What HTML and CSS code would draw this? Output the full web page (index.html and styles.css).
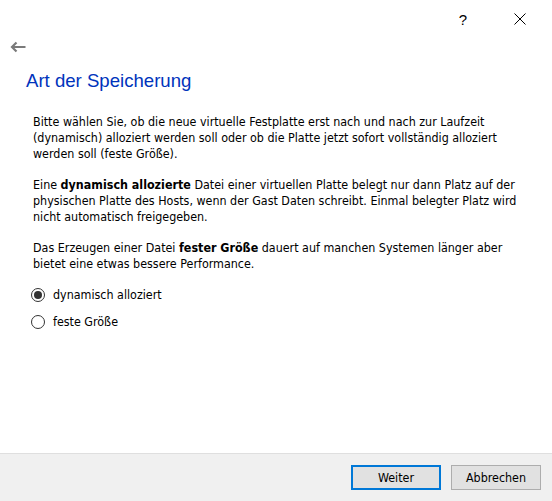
FILE: index.html
```html
<!DOCTYPE html>
<html lang="de">
<head>
<meta charset="utf-8">
<link rel="stylesheet" href="styles.css">
</head>
<body>
<div class="dialog">
  <div class="titlebar">
    <span class="help">?</span>
    <svg class="close" width="12" height="12" viewBox="0 0 12 12"><path d="M0.5 0.5 L11.5 11.5 M11.5 0.5 L0.5 11.5" stroke="#000" stroke-width="1" fill="none"/></svg>
  </div>
  <div class="backrow">
    <svg class="back" width="16" height="12" viewBox="0 0 16 12"><path d="M2 6 H15.5 M6.5 1.5 L2 6 L6.5 10.5" stroke="#7a7a7a" stroke-width="2.2" fill="none"/></svg>
  </div>
  <main class="content">
    <h1 class="title">Art der Speicherung</h1>
    <p class="para">Bitte wählen Sie, ob die neue virtuelle Festplatte erst nach und nach zur Laufzeit (dynamisch) alloziert werden soll oder ob die Platte jetzt sofort vollständig alloziert werden soll (feste Größe).</p>
    <p class="para">Eine <b>dynamisch allozierte</b> Datei einer virtuellen Platte belegt nur dann Platz auf der physischen Platte des Hosts, wenn der Gast Daten schreibt. Einmal belegter Platz wird nicht automatisch freigegeben.</p>
    <p class="para">Das Erzeugen einer Datei <b>fester Größe</b> dauert auf manchen Systemen länger aber bietet eine etwas bessere Performance.</p>
    <div class="options">
      <label class="option"><span class="radio checked"></span><span class="label">dynamisch alloziert</span></label>
      <label class="option"><span class="radio"></span><span class="label">feste Größe</span></label>
    </div>
  </main>
  <footer class="footer">
    <button class="btn primary">Weiter</button>
    <button class="btn">Abbrechen</button>
  </footer>
</div>
</body>
</html>
```

FILE: styles.css
```css
html, body {
  margin: 0;
  padding: 0;
  background: #fff;
}
body {
  width: 552px;
  height: 501px;
  overflow: hidden;
  font-family: "DejaVu Sans Condensed", "DejaVu Sans", sans-serif;
  color: #000;
}
.dialog {
  height: 501px;
  display: flex;
  flex-direction: column;
}
.titlebar {
  height: 38px;
  display: flex;
  align-items: center;
  justify-content: flex-end;
  gap: 47px;
  padding-right: 26px;
}
.help {
  font-family: "Liberation Sans", sans-serif;
  font-size: 15px;
  color: #000;
}
.close {
  display: block;
}
.backrow {
  height: 18px;
  padding-left: 10px;
  display: flex;
  align-items: center;
}
.back { display: block; }
.content {
  flex: 1;
  padding: 12px 32px 0 33px;
}
.title {
  margin: 0 0 0 -7px;
  font-family: "Liberation Sans", sans-serif;
  font-weight: normal;
  font-size: 18.6px;
  line-height: 26px;
  color: #0033bc;
}
.para {
  margin: 20px 0 0;
  font-size: 12.4px;
  line-height: 16px;
}
.para + .para { margin-top: 15px; }
.options {
  margin-top: 15px;
  margin-left: -2px;
  display: flex;
  flex-direction: column;
  gap: 11px;
}
.option {
  display: flex;
  align-items: center;
  gap: 8px;
  font-size: 12.4px;
  line-height: 16px;
}
.radio {
  width: 12px;
  height: 12px;
  border: 1px solid #333;
  border-radius: 50%;
  background: #fff;
  position: relative;
}
.radio.checked::after {
  content: "";
  position: absolute;
  left: 2px; top: 2px;
  width: 8px; height: 8px;
  border-radius: 50%;
  background: #333;
}
.footer {
  height: 46px;
  background: #f0f0f0;
  border-top: 1px solid #dfdfdf;
  display: flex;
  align-items: center;
  justify-content: flex-end;
  gap: 10px;
  padding: 0 11px 1px 0;
}
.btn {
  width: 90px;
  height: 25px;
  border: 1px solid #adadad;
  background: #e1e1e1;
  font-family: "DejaVu Sans Condensed", "DejaVu Sans", sans-serif;
  font-size: 12.4px;
  color: #000;
  padding: 0;
}
.btn.primary {
  border: 2px solid #0078d7;
}
```
